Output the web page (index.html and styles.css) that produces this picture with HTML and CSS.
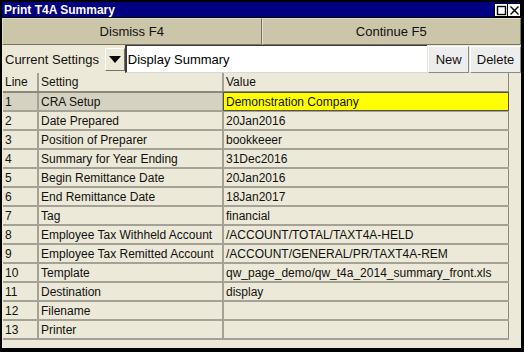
FILE: index.html
```html
<!DOCTYPE html>
<html lang="en">
<head>
    <meta charset="UTF-8">
    <title>Print T4A Summary</title>
    <link rel="stylesheet" href="styles.css">
</head>
<body>
    <div class="window">
        <div class="titlebar">
            <span class="title">Print T4A Summary</span>
            <div class="win-buttons">
                <span class="win-btn">
                    <svg width="11" height="11" viewBox="0 0 11 11"><rect x="1.5" y="1.5" width="8" height="8" fill="none" stroke="#000" stroke-width="1.4"/></svg>
                </span>
                <span class="win-btn">
                    <svg width="11" height="11" viewBox="0 0 11 11"><path d="M1.5 1.5 L9.5 9.5 M9.5 1.5 L1.5 9.5" stroke="#000" stroke-width="1.4"/></svg>
                </span>
            </div>
        </div>

        <div class="actions">
            <button class="action">Dismiss F4</button>
            <button class="action">Continue F5</button>
        </div>

        <div class="toolbar">
            <span class="settings-label">Current Settings</span>
            <button class="dropdown">
                <svg width="12" height="7" viewBox="0 0 12 7"><path d="M0 0 L12 0 L6 7 Z" fill="#000"/></svg>
            </button>
            <input class="settings-name" type="text" value="Display Summary">
            <button class="tool-btn btn-new">New</button>
            <button class="tool-btn btn-delete">Delete</button>
        </div>

        <div class="grid-wrap">
            <table class="grid">
                <thead>
                    <tr><th class="col-line">Line</th><th class="col-setting">Setting</th><th class="col-value">Value</th></tr>
                </thead>
                <tbody>
                    <tr class="selected"><td>1</td><td>CRA Setup</td><td class="current">Demonstration Company</td></tr>
                    <tr><td>2</td><td>Date Prepared</td><td>20Jan2016</td></tr>
                    <tr><td>3</td><td>Position of Preparer</td><td>bookkeeer</td></tr>
                    <tr><td>4</td><td>Summary for Year Ending</td><td>31Dec2016</td></tr>
                    <tr><td>5</td><td>Begin Remittance Date</td><td>20Jan2016</td></tr>
                    <tr><td>6</td><td>End Remittance Date</td><td>18Jan2017</td></tr>
                    <tr><td>7</td><td>Tag</td><td>financial</td></tr>
                    <tr><td>8</td><td>Employee Tax Withheld Account</td><td>/ACCOUNT/TOTAL/TAXT4A-HELD</td></tr>
                    <tr><td>9</td><td>Employee Tax Remitted Account</td><td>/ACCOUNT/GENERAL/PR/TAXT4A-REM</td></tr>
                    <tr><td>10</td><td>Template</td><td>qw_page_demo/qw_t4a_2014_summary_front.xls</td></tr>
                    <tr><td>11</td><td>Destination</td><td>display</td></tr>
                    <tr><td>12</td><td>Filename</td><td></td></tr>
                    <tr><td>13</td><td>Printer</td><td></td></tr>
                </tbody>
            </table>
        </div>
    </div>
</body>
</html>
```

FILE: styles.css
```css
:root {
    --title-blue: #000080;
    --khaki: #cbc5a9;
    --beige: #ece9d8;
    --grid-line: #a4a196;
    --selected: #d6d2c2;
}

* {
    margin: 0;
    padding: 0;
    box-sizing: border-box;
    font-family: 'Liberation Sans', Arial, sans-serif;
}

body {
    background-color: #000;
    width: 524px;
    height: 352px;
    overflow: hidden;
}

.window {
    margin: 2px 3px 4px 2px;
    height: 346px;
    background-color: var(--beige);
    display: flex;
    flex-direction: column;
}

.titlebar {
    height: 15px;
    background-color: var(--title-blue);
    color: white;
    display: flex;
    justify-content: space-between;
    align-items: center;
    padding-left: 2px;
}

.title {
    font-size: 12px;
    font-weight: bold;
}

.win-buttons {
    display: flex;
    align-self: flex-start;
    margin-top: 1px;
}

.win-btn {
    width: 14px;
    height: 14px;
    background-color: white;
    border: 1px solid #000;
    display: flex;
    align-items: center;
    justify-content: center;
}

.win-btn + .win-btn {
    border-left: none;
    width: 13px;
}

.actions {
    display: flex;
    height: 28px;
    border-top: 1px solid #000;
}

.action {
    flex: 1;
    background-color: var(--khaki);
    border: 1px solid #77735f;
    border-top-color: #e2ddc8;
    border-left-color: #e2ddc8;
    font-size: 13px;
    color: #111;
}

.toolbar {
    display: flex;
    align-items: center;
    height: 28px;
}

.settings-label {
    width: 103px;
    padding-left: 3px;
    font-size: 13px;
    color: #111;
}

.dropdown {
    width: 20px;
    height: 23px;
    background-color: var(--beige);
    border: 1px solid #77735f;
    border-top-color: #fff;
    border-left-color: #fff;
    display: flex;
    align-items: center;
    justify-content: center;
}

.settings-name {
    width: 303px;
    height: 28px;
    border: none;
    border-left: 2px solid #3c3c3c;
    border-top: 1px solid #3c3c3c;
    border-bottom: 1px solid #d8d8d8;
    background-color: white;
    font-size: 13px;
    padding-left: 1px;
    color: #000;
    outline: none;
}

.tool-btn {
    height: 27px;
    background-color: #ededed;
    border: 1px solid #8a8a8a;
    border-top-color: #fff;
    border-left-color: #fff;
    font-size: 13px;
    color: #111;
    margin-top: 1px;
}

.btn-new {
    width: 41px;
    margin-left: 1px;
}

.btn-delete {
    width: 51px;
    margin-left: 1px;
}

.grid-wrap {
    margin-left: 1px;
    width: 506px;
}

.grid {
    width: 506px;
    border-collapse: collapse;
    table-layout: fixed;
    border-right: 1px solid #fff;
    border-bottom: 1px solid #fff;
    font-size: 12px;
}

.grid th,
.grid td {
    height: 19px;
    padding: 0 2px;
    text-align: left;
    font-weight: normal;
    white-space: nowrap;
    overflow: hidden;
    border-right: 2px solid var(--grid-line);
    border-bottom: 2px solid var(--grid-line);
    color: #111;
}

.grid th {
    border-bottom-color: #8c897c;
    font-size: 12px;
}

.grid td:last-child,
.grid th:last-child {
    border-right: 1px solid #8c897c;
}

.col-line {
    width: 35px;
}

.col-setting {
    width: 185px;
}

.grid tr.selected td {
    background-color: var(--selected);
}

.grid tr.selected td.current {
    background-color: #ffff00;
    outline: 1px solid #55533f;
    outline-offset: -1px;
}
```
